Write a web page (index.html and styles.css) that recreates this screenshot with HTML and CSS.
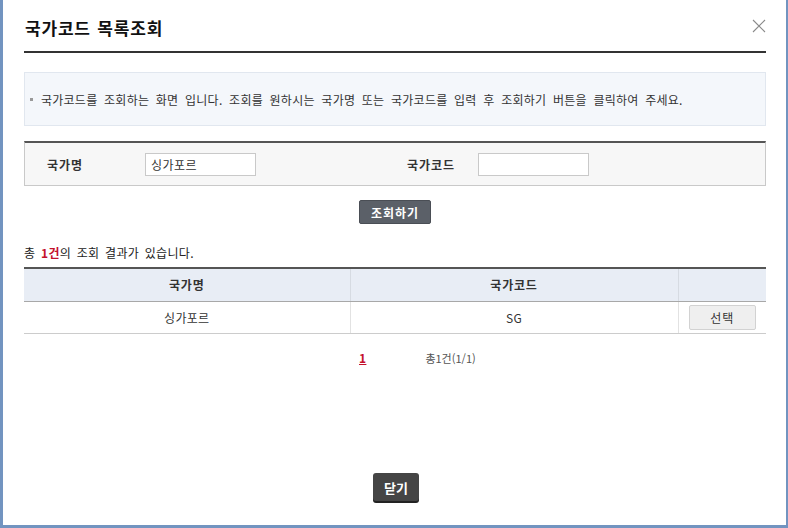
FILE: index.html
```html
<!DOCTYPE html>
<html lang="ko">
<head>
  <meta charset="UTF-8">
  <title>국가코드 목록조회</title>
  <link rel="stylesheet" href="styles.css">
</head>
<body>
  <div class="popup">
    <div class="popup-header">
      <h2>국가코드 목록조회</h2>
      <button type="button" class="close-x" aria-label="닫기">
        <svg width="14" height="14" viewBox="0 0 14 14"><path d="M1 1 L13 13 M13 1 L1 13" stroke="#8a8a8a" stroke-width="1.1" fill="none"/></svg>
      </button>
    </div>

    <div class="info-box">
      <p><span class="dot"></span>국가코드를 조회하는 화면 입니다. 조회를 원하시는 국가명 또는 국가코드를 입력 후 조회하기 버튼을 클릭하여 주세요.</p>
    </div>

    <div class="search-box">
      <label class="search-label first" for="nation-name">국가명</label>
      <input type="text" id="nation-name" class="search-input" value="싱가포르">
      <label class="search-label second" for="nation-code">국가코드</label>
      <input type="text" id="nation-code" class="search-input">
    </div>

    <div class="btn-row">
      <button type="button" class="search-btn">조회하기</button>
    </div>

    <p class="result-count">총 <strong>1건</strong>의 조회 결과가 있습니다.</p>

    <table class="result-table">
      <thead>
        <tr>
          <th class="col-name">국가명</th>
          <th class="col-code">국가코드</th>
          <th class="col-btn"></th>
        </tr>
      </thead>
      <tbody>
        <tr>
          <td>싱가포르</td>
          <td>SG</td>
          <td><button type="button" class="select-btn">선택</button></td>
        </tr>
      </tbody>
    </table>

    <div class="paging">
      <a href="#" class="page-on">1</a>
      <span class="page-total">총1건(1/1)</span>
    </div>

    <div class="footer-btns">
      <button type="button" class="close-btn">닫기</button>
    </div>
  </div>
</body>
</html>
```

FILE: styles.css
```css
* {
  margin: 0;
  padding: 0;
  box-sizing: border-box;
}

body {
  font-family: "Noto Sans CJK KR", "Noto Sans", sans-serif;
  font-size: 12px;
  color: #333;
  background-color: #ffffff;
  letter-spacing: 0.3px;
  word-spacing: 2px;
}

.popup {
  height: 528px;
  padding: 0 20px 0 21px;
  border-left: 3px solid #7294c0;
  border-right: 2px solid #7294c0;
  border-bottom: 3px solid #7294c0;
  position: relative;
}

.popup-header {
  padding-top: 16px;
  padding-bottom: 11px;
  border-bottom: 2px solid #333;
  position: relative;
}

.popup-header h2 {
  font-size: 17px;
  line-height: 24px;
  font-weight: bold;
  color: #111;
  padding-left: 1px;
  letter-spacing: 0.8px;
  word-spacing: 1px;
}

.close-x {
  position: absolute;
  right: 0;
  top: 19px;
  width: 14px;
  height: 14px;
  border: none;
  background: none;
  cursor: pointer;
}

.info-box {
  margin-top: 19px;
  height: 54px;
  background-color: #f4f7fb;
  border: 1px solid #e1e7ef;
  display: flex;
  align-items: center;
  padding-left: 5px;
}

.info-box p {
  font-size: 12px;
  word-spacing: 3px;
  letter-spacing: 0.25px;
  color: #333;
  display: flex;
  align-items: center;
  padding-top: 1px;
}

.dot {
  display: inline-block;
  width: 3px;
  height: 3px;
  background-color: #999;
  margin-right: 8px;
}

.search-box {
  margin-top: 15px;
  height: 45px;
  background-color: #f7f7f7;
  border: 1px solid #c9c9c9;
  border-top: 2px solid #555;
  display: flex;
  align-items: center;
}

.search-label {
  font-weight: bold;
  color: #333;
  letter-spacing: 1px;
}

.search-label.first {
  width: 120px;
  padding-left: 22px;
}

.search-label.second {
  width: 71px;
  margin-left: 151px;
}

.search-input {
  width: 111px;
  height: 23px;
  border: 1px solid #c9c9c9;
  background-color: #fff;
  font-family: inherit;
  font-size: 12px;
  color: #333;
  padding: 0 5px;
  outline: none;
  letter-spacing: 0.5px;
}

.btn-row {
  margin-top: 14px;
  display: flex;
  justify-content: center;
}

.search-btn {
  width: 72px;
  height: 24px;
  background-color: #5b6068;
  border: 1px solid #4a4e55;
  border-radius: 2px;
  color: #fff;
  font-family: inherit;
  font-size: 12px;
  font-weight: bold;
  letter-spacing: 1px;
  cursor: pointer;
}

.result-count {
  margin-top: 20px;
  font-size: 12px;
  color: #222;
  line-height: 18px;
}

.result-count strong {
  color: #c4102c;
}

.result-table {
  margin-top: 5px;
  width: 100%;
  border-collapse: collapse;
  border-top: 2px solid #555;
  table-layout: fixed;
}

.result-table th {
  height: 33px;
  background-color: #e8edf5;
  font-weight: bold;
  color: #333;
  border-bottom: 1px solid #a8a8a8;
  border-left: 1px solid #d6dbe2;
  letter-spacing: 0.8px;
}

.result-table td {
  height: 32px;
  text-align: center;
  color: #333;
  border-bottom: 1px solid #ccc;
  border-left: 1px solid #e2e2e2;
}

.result-table th:first-child,
.result-table td:first-child {
  border-left: none;
}

.col-name {
  width: 326px;
}

.col-code {
  width: 328px;
}

.select-btn {
  width: 67px;
  height: 25px;
  background-color: #efefef;
  border: 1px solid #d2d2d2;
  border-radius: 2px;
  font-family: inherit;
  font-size: 12px;
  color: #333;
  letter-spacing: 1px;
  cursor: pointer;
}

.paging {
  margin-top: 15px;
  display: flex;
  align-items: center;
  padding-left: 335px;
  height: 18px;
}

.page-on {
  color: #c4102c;
  font-weight: bold;
  text-decoration: underline;
  font-size: 12px;
}

.page-total {
  margin-left: 59px;
  font-size: 11px;
  color: #555;
  letter-spacing: 0;
}

.footer-btns {
  position: absolute;
  left: 0;
  right: 0;
  bottom: 24px;
  display: flex;
  justify-content: center;
}

.close-btn {
  width: 46px;
  height: 28px;
  background-color: #454545;
  border: none;
  border-radius: 3px;
  box-shadow: 0 2px 0 #222;
  color: #fff;
  font-family: inherit;
  font-size: 13px;
  font-weight: bold;
  cursor: pointer;
  margin-left: 3px;
}
```
